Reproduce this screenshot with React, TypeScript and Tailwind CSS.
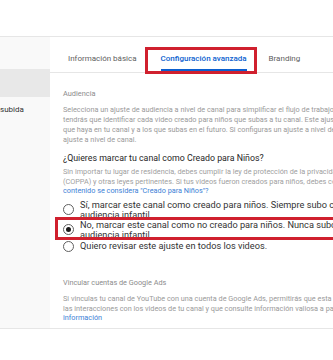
import React from "react";

function Radio({ checked }: { checked?: boolean }) {
  return (
    <div className="w-[11px] h-[11px] rounded-full border-[1.5px] border-[#5f5f5f] flex items-center justify-center shrink-0 bg-white">
      {checked ? <div className="w-[5px] h-[5px] rounded-full bg-[#1a1a1a]" /> : null}
    </div>
  );
}

export default function App() {
  const font = { fontFamily: "Roboto, 'Noto Sans', sans-serif" };
  return (
    <div className="w-[333px] h-[360px] bg-white overflow-hidden flex flex-col" style={font}>
      <div className="h-[37px] shrink-0 border-b border-[#e6e6e6]" />
      <div className="flex h-[292px] shrink-0 border-b border-[#e6e6e6]">
        {/* sidebar */}
        <div className="w-[50px] shrink-0 bg-[#f9f9f9] flex flex-col">
          <div className="h-[32px]" />
          <div className="h-[28px] bg-[#e8e8e8]" />
          <div className="h-[26px] flex items-center text-[8px] text-[#333] whitespace-nowrap overflow-hidden">
            subida
          </div>
        </div>
        {/* main */}
        <div className="flex-1 min-w-0 flex flex-col overflow-hidden">
          <div className="relative h-[36px] shrink-0 border-b border-[#e6e6e6] flex items-end text-[8px] whitespace-nowrap">
            <div className="ml-[18px] h-[36px] flex items-center pt-[9px] text-[#606060]">Información básica</div>
            <div className="ml-[24px] h-[36px] w-[86px] flex flex-col items-center justify-center pt-[9px] text-[#0b5fcf] font-medium relative">
              Configuración avanzada
              <div className="absolute left-0 right-0 bottom-[1px] h-[2px] bg-[#0b5fcf]" />
            </div>
            <div className="ml-[22px] h-[36px] flex items-center pt-[9px] text-[#606060]">Branding</div>
            <div className="absolute left-[95px] top-[10px] w-[112px] h-[27px] border-[3px] border-[#d0202e]" />
          </div>

          <div className="pl-[13px] flex flex-col whitespace-nowrap">
            <div className="mt-[16px] text-[7.4px] text-[#8c8c8c] leading-[10px]">Audiencia</div>
            <div className="mt-[6px] text-[7.3px] text-[#9a9a9a] leading-[10px]">
              <div>Selecciona un ajuste de audiencia a nivel de canal para simplificar el flujo de trabajo. Si lo haces, no</div>
              <div>tendrás que identificar cada video creado para niños que subas a tu canal. Este ajuste se aplicará a los videos</div>
              <div>que haya en tu canal y a los que subas en el futuro. Si configuras un ajuste a nivel de video, este anulará el</div>
              <div>ajuste a nivel de canal.</div>
            </div>
            <div className="mt-[7px] text-[8.8px] text-[#262626] leading-[12px]">¿Quieres marcar tu canal como Creado para Niños?</div>
            <div className="mt-[3px] text-[7.3px] text-[#a0a0a0] leading-[9.5px]">
              <div>Sin importar tu lugar de residencia, debes cumplir la ley de protección de la privacidad en línea para niños</div>
              <div>(COPPA) y otras leyes pertinentes. Si tus videos fueron creados para niños, debes configurarlos como tal. ¿Qué</div>
              <div className="text-[#3d7fd6]">contenido se considera "Creado para Niños"?</div>
            </div>

            <div className="mt-[4.5px] flex flex-col text-[9.2px] text-[#333] leading-[10px]">
              <div className="flex items-start">
                <div className="w-[17px] pt-[4px] shrink-0"><Radio /></div>
                <div>
                  <div>Sí, marcar este canal como creado para niños. Siempre subo contenido para</div>
                  <div>audiencia infantil.</div>
                </div>
              </div>
              <div className="relative flex items-start">
                <div className="w-[17px] pt-[4px] shrink-0"><Radio checked /></div>
                <div>
                  <div>No, marcar este canal como no creado para niños. Nunca subo contenido para</div>
                  <div>audiencia infantil.</div>
                </div>
                <div className="absolute left-[-8px] top-[-3px] w-[300px] h-[23px] border-[3px] border-[#d0202e]" />
              </div>
              <div className="flex items-start mt-[1px]">
                <div className="w-[17px] pt-[0px] shrink-0"><Radio /></div>
                <div>Quiero revisar este ajuste en todos los videos.</div>
              </div>
            </div>

            <div className="mt-[26px] text-[7.3px] text-[#8c8c8c] leading-[10px]">Vincular cuentas de Google Ads</div>
            <div className="mt-[6px] text-[7.3px] text-[#9a9a9a] leading-[9.5px]">
              <div>Si vinculas tu canal de YouTube con una cuenta de Google Ads, permitirás que esta pueda publicar anuncios basados en</div>
              <div>las interacciones con los videos de tu canal y que consulte información valiosa a partir de ellos. Más</div>
              <div className="text-[#3d7fd6]">información</div>
            </div>
          </div>
        </div>
      </div>
      <div className="flex-1" />
    </div>
  );
}
